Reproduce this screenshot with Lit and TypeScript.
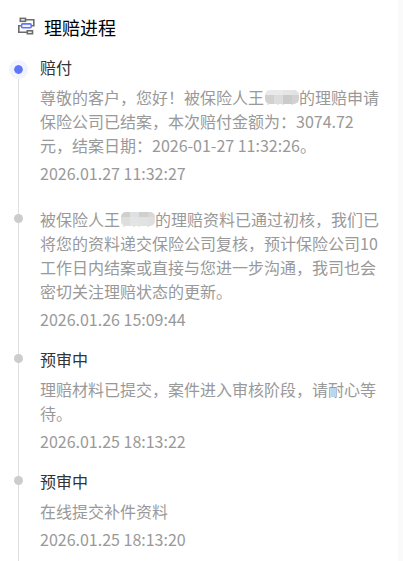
import { LitElement, html, svg, css, nothing } from "lit";
import { customElement, property } from "lit/decorators.js";
import { classMap } from "lit/directives/class-map.js";

interface Step {
  title?: string;
  // A description is split where the insured person's name is masked.
  text: string[];
  time: string;
  shades?: string[][];
}

const STEPS: Step[] = [
  {
    title: "赔付",
    text: [
      "尊敬的客户，您好！被保险人王",
      "的理赔申请保险公司已结案，本次赔付金额为：3074.72元，结案日期：2026-01-27 11:32:26。",
    ],
    time: "2026.01.27 11:32:27",
    shades: [
      ["#e9e9e8", "#e9e9e9", "#e4e5e5", "#e0e2e5"],
      ["#d2d1cf", "#dcdcdd", "#cbcbcc", "#d2d1d4"],
    ],
  },
  {
    text: [
      "被保险人王",
      "的理赔资料已通过初核，我们已将您的资料递交保险公司复核，预计保险公司10工作日内结案或直接与您进一步沟通，我司也会密切关注理赔状态的更新。",
    ],
    time: "2026.01.26 15:09:44",
    shades: [
      ["#cfcfce", "#dfe0e2", "#d0cfce", "#d8d7d6"],
      ["#dededd", "#e3e4e5", "#e2e2e2", "#dedfe0"],
    ],
  },
  {
    title: "预审中",
    text: ["理赔材料已提交，案件进入审核阶段，请耐心等待。"],
    time: "2026.01.25 18:13:22",
  },
  {
    title: "预审中",
    text: ["在线提交补件资料"],
    time: "2026.01.25 18:13:20",
  },
];

@customElement("name-mask")
export class NameMask extends LitElement {
  @property({ attribute: false }) shades: string[][] = [];

  static styles = css`
    :host {
      display: inline-block;
      width: 34px;
      height: 16px;
      margin-left: 1px;
      vertical-align: -2px;
    }
    .tiles {
      display: block;
      width: 100%;
      height: 100%;
    }
  `;

  render() {
    return html`<svg class="tiles" viewBox="0 0 34 16" aria-hidden="true">
      <defs>
        <clipPath id="pill"><rect width="34" height="14" rx="5" /></clipPath>
      </defs>
      <path d="M3 10v5M12 14h2M18 13v2M28 13l-1 2" stroke="#d2ccc6" fill="none" />
      <g clip-path="url(#pill)">
        ${this.shades.map((row, r) =>
          row.map(
            (c, i) => svg`<rect x=${i * 9} y=${r * 5} width="9" height="9" fill=${c} />`
          )
        )}
      </g>
    </svg>`;
  }
}

@customElement("claim-step")
export class ClaimStep extends LitElement {
  @property({ attribute: false }) step!: Step;
  @property({ type: Boolean }) active = false;

  static styles = css`
    :host {
      display: grid;
      grid-template-columns: 19px 1fr;
      column-gap: 12px;
    }
    .rail {
      display: grid;
      grid-template-rows: auto 1fr;
      justify-items: center;
      background: linear-gradient(#e0e0e0, #e0e0e0) center / 1px 100% no-repeat;
    }
    .rail.active {
      padding-top: 5px;
      background-position: center 15px;
    }
    .rail.untitled {
      padding-top: 6px;
    }
    .dot {
      width: 9px;
      height: 9px;
      margin-top: 7px;
      border-radius: 50%;
      background: #cccccc;
    }
    .active .dot {
      margin-top: 0;
      border: 5px solid #f1f3ff;
      background: #5f76fb;
      background-clip: padding-box;
    }
    .body {
      padding-bottom: 16px;
    }
    h2,
    p {
      margin: 0;
      font-size: 16px;
      line-height: 24px;
      font-weight: 400;
    }
    h2 {
      color: #333333;
    }
    .text {
      margin-top: 6px;
      color: #999999;
      word-break: break-all;
    }
    time {
      display: block;
      margin-top: 4px;
      color: #999999;
    }
  `;

  render() {
    const { title, text, time, shades } = this.step;
    return html`
      <div class=${classMap({ rail: true, active: this.active, untitled: !title })}>
        <span class="dot"></span>
      </div>
      <div class="body">
        ${title ? html`<h2>${title}</h2>` : nothing}
        <p class="text">${text[0]}${shades
            ? html`<name-mask .shades=${shades}></name-mask>`
            : nothing}${text[1] ?? nothing}</p>
        <time>${time}</time>
      </div>
    `;
  }
}

@customElement("app-root")
export class AppRoot extends LitElement {
  static styles = css`
    :host {
      display: block;
      box-sizing: border-box;
      height: 100vh;
      overflow: hidden;
      padding-right: 5px;
      background: #fafafa;
      font-family: "Noto Sans CJK SC", sans-serif;
      font-size: 16px;
      line-height: 24px;
    }
    .card {
      min-height: 100%;
      box-sizing: border-box;
      padding: 13px 16px 0 9px;
      background: #ffffff;
    }
    header {
      display: flex;
      align-items: center;
      gap: 9px;
      padding-left: 8px;
      margin-bottom: 14px;
    }
    .icon {
      width: 18px;
      height: 18px;
      margin-bottom: 3px;
    }
    h1 {
      margin: 0;
      font-size: 18px;
      line-height: 28px;
      font-weight: 400;
      color: #000000;
    }
  `;

  render() {
    return html`
      <main class="card">
        <header>
          <svg class="icon" viewBox="0 0 18 18" fill="none" stroke="#6c6c6c" stroke-width="1.6" aria-hidden="true">
            <rect x="3.3" y="1.4" width="5.2" height="2.9" />
            <path d="M8.5 2.8H16.8V8.8H14.5M3.8 8.8H1.8V15.2H10" />
            <rect x="10.3" y="13.8" width="5.2" height="2.9" />
            <rect x="4.6" y="6.9" width="9.6" height="3.8" rx="1" stroke="#5f76fb" fill="#f4f5ff" />
          </svg>
          <h1>理赔进程</h1>
        </header>
        ${STEPS.map(
          (step, i) => html`<claim-step .step=${step} ?active=${i === 0}></claim-step>`
        )}
      </main>
    `;
  }
}
